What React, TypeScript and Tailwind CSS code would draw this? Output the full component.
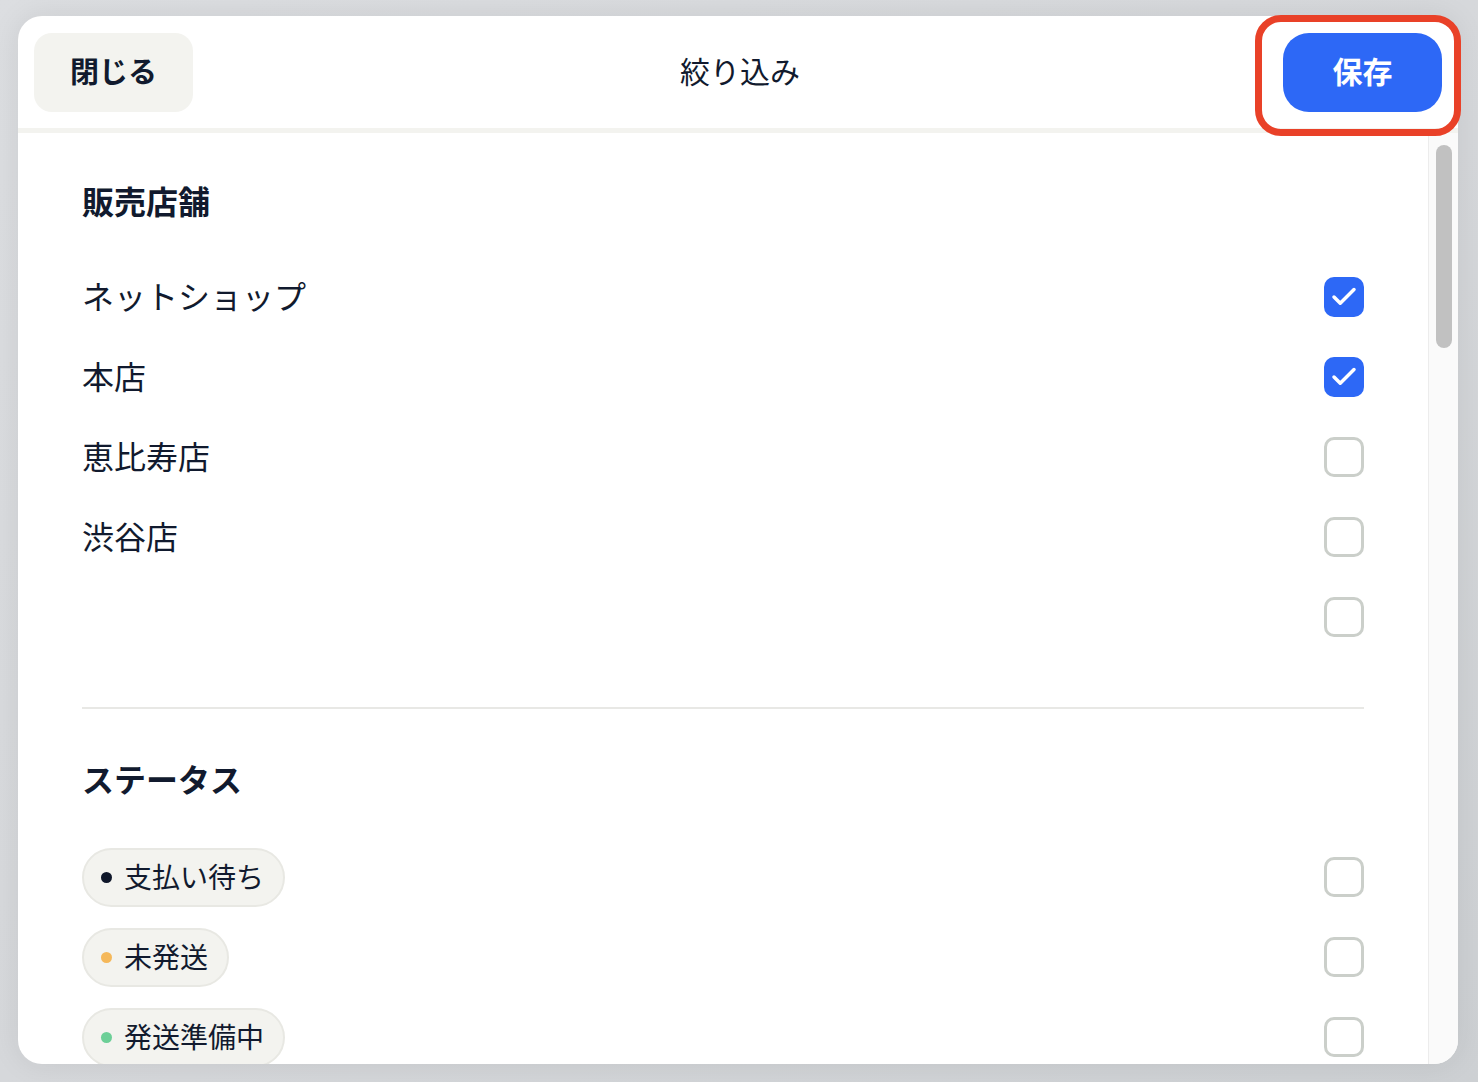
import { Check } from 'lucide-react';

const font = { fontFamily: '"Noto Sans CJK JP", "Noto Sans", sans-serif' };

interface CheckBoxProps {
  checked?: boolean;
}

function CheckBox({ checked = false }: CheckBoxProps) {
  if (checked) {
    return (
      <div className="w-10 h-10 rounded-[10px] bg-[#2d68f6] flex items-center justify-center">
        <Check className="text-white" size={30} strokeWidth={2.8} />
      </div>
    );
  }
  return <div className="w-10 h-10 rounded-[10px] border-[3px] border-[#cbcfca] bg-white" />;
}

const shops = [
  { name: 'ネットショップ', checked: true },
  { name: '本店', checked: true },
  { name: '恵比寿店', checked: false },
  { name: '渋谷店', checked: false },
  { name: '', checked: false },
];

const statuses = [
  { name: '支払い待ち', dot: 'bg-[#0f172a]' },
  { name: '未発送', dot: 'bg-[#f5b85a]' },
  { name: '発送準備中', dot: 'bg-[#6ccf97]' },
];

export default function App() {
  return (
    <div
      className="w-[1478px] h-[1082px] overflow-hidden bg-gradient-to-br from-[#dcdee1] via-[#d6d8db] to-[#cdd0d3] pt-4 pl-[18px]"
      style={font}
    >
      <div className="w-[1440px] h-[1048px] bg-white rounded-[24px] flex flex-col shadow-[0_0_30px_rgba(0,0,0,0.08)] text-[#111a2e]">
        {/* header */}
        <div className="h-[117px] shrink-0 rounded-t-[24px] border-b-[5px] border-[#f3f3ef] px-4 flex items-center justify-between">
          <button className="w-[159px] h-[79px] rounded-[18px] bg-[#f3f3ef] text-[29px] font-bold pb-[2px]">
            閉じる
          </button>
          <h1 className="text-[30px] pl-[4px] pb-[4px]">絞り込み</h1>
          <div className="relative">
            <button className="w-[159px] h-[79px] rounded-[26px] bg-[#2d68f6] text-white text-[30px] font-bold pb-[4px]">
              保存
            </button>
            <span className="absolute -left-[28px] -top-[18px] -right-[19px] -bottom-[24px] border-[7px] border-[#e94128] rounded-[26px]" />
          </div>
        </div>

        {/* body */}
        <div className="flex flex-1 min-h-0 rounded-b-[24px] overflow-hidden">
          <div className="flex-1 overflow-hidden px-16 pt-[47px]">
            <h2 className="text-[32px] leading-[40px] font-bold">販売店舗</h2>
            <div className="mt-[37px]">
              {shops.map((s, i) => (
                <div key={i} className="h-20 flex items-center justify-between">
                  <span className="text-[32px] pb-[4px]">{s.name}</span>
                  <CheckBox checked={s.checked} />
                </div>
              ))}
            </div>
            <div className="mt-[50px] h-[2px] bg-[#e8e8e5]" />
            <h2 className="mt-[49px] text-[32px] leading-[40px] font-bold">ステータス</h2>
            <div className="mt-[39px]">
              {statuses.map((s) => (
                <div key={s.name} className="h-20 flex items-center justify-between">
                  <div className="h-[59px] pl-[17px] pr-[19px] rounded-full bg-[#f3f3ef] border-2 border-[#e8e8e3] flex items-center gap-[12px]">
                    <span className={`w-[11px] h-[11px] rounded-full ${s.dot}`} />
                    <span className="text-[28px] pb-[3px]">{s.name}</span>
                  </div>
                  <CheckBox />
                </div>
              ))}
            </div>
          </div>
          <div className="w-[30px] shrink-0 border-l border-[#ececec] bg-[#fafafa] pt-3 flex justify-center">
            <div className="w-4 h-[203px] rounded-full bg-[#c1c1c1]" />
          </div>
        </div>
      </div>
    </div>
  );
}
